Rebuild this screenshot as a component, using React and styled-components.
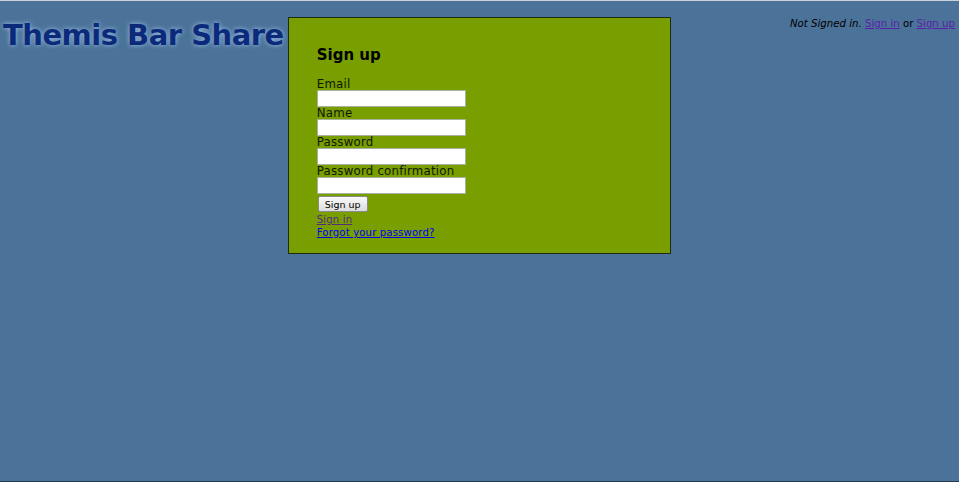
import React from "react";
import styled, { createGlobalStyle } from "styled-components";

const GlobalStyle = createGlobalStyle`
  html, body {
    margin: 0;
    padding: 0;
    background-color: #4b7298;
  }
  body {
    font-family: "DejaVu Sans", Verdana, sans-serif;
  }
`;

const Page = styled.div`
  box-sizing: border-box;
  height: 482px;
  border-top: 1px solid #c9d1da;
  border-bottom: 1px solid #243a52;
  background-color: #4b7298;
  display: flex;
  align-items: flex-start;
`;

const Title = styled.h1`
  margin: 17px 0 0 3px;
  font-size: 29px;
  font-weight: bold;
  color: #0c2a7a;
  text-shadow: 0 0 5px #9cc0ea;
  white-space: nowrap;
  letter-spacing: -0.5px;
`;

const Box = styled.div`
  margin: 16px 0 0 4px;
  width: 383px;
  height: 237px;
  box-sizing: border-box;
  background-color: #789e00;
  border: 1px solid #1f2a10;
  padding: 28px 28px;
`;

const Heading = styled.h2`
  margin: 0 0 14px;
  font-size: 15px;
  font-weight: bold;
  color: #000;
`;

const Field = styled.div`
  display: flex;
  flex-direction: column;
  align-items: flex-start;
`;

const Label = styled.label`
  font-size: 11.8px;
  line-height: 12px;
  letter-spacing: 0.2px;
  color: #101800;
`;

const Input = styled.input`
  box-sizing: border-box;
  width: 149px;
  height: 17px;
  margin: 0;
  border: 1px solid #a8b0a0;
  background: #fff;
  padding: 0 2px;
`;

const Button = styled.button`
  display: block;
  margin: 2px 0 1px 1px;
  height: 16px;
  padding: 0 6px;
  font-family: "DejaVu Sans", Verdana, sans-serif;
  font-size: 9.5px;
  color: #000;
  background: linear-gradient(#fafafa, #dcdcdc);
  border: 1px solid #8a8a8a;
  border-radius: 2px;
`;

const LinkLine = styled.a`
  display: block;
  font-size: 10.2px;
  line-height: 13px;
  letter-spacing: 0.1px;
  color: ${(p) => (p.$visited ? "#552a80" : "#0000ee")};
  text-decoration: underline;
`;

const UserNav = styled.div`
  margin: 17px 4px 0 auto;
  font-size: 10.2px;
  color: #000;
  white-space: nowrap;
`;

const NavLink = styled.a`
  color: #5a1fa8;
  text-decoration: underline;
`;

const fields = ["Email", "Name", "Password", "Password confirmation"];

export default function App() {
  return (
    <>
      <GlobalStyle />
      <Page>
        <Title>Themis Bar Share</Title>
        <Box>
          <Heading>Sign up</Heading>
          {fields.map((f) => (
            <Field key={f}>
              <Label>{f}</Label>
              <Input type={f.startsWith("Password") ? "password" : "text"} />
            </Field>
          ))}
          <Button>Sign up</Button>
          <LinkLine href="#" $visited>
            Sign in
          </LinkLine>
          <LinkLine href="#">Forgot your password?</LinkLine>
        </Box>
        <UserNav>
          <i>Not Signed in.</i> <NavLink href="#">Sign in</NavLink> or{" "}
          <NavLink href="#">Sign up</NavLink>
        </UserNav>
      </Page>
    </>
  );
}
